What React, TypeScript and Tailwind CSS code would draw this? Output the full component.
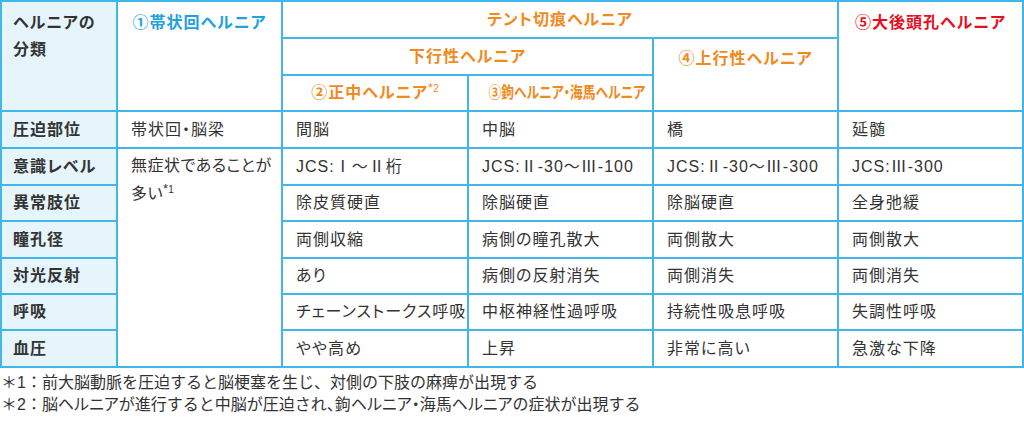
import React from "react";

const B = "border-2 border-[#41b6e9]";
const font = "font-['Liberation_Sans','Noto_Sans_CJK_JP',sans-serif]";

const rows: [string, string | null, string, string, string, string][] = [
  ["圧迫部位", "帯状回・脳梁", "間脳", "中脳", "橋", "延髄"],
  ["意識レベル", null, "JCS:Ⅰ〜Ⅱ桁", "JCS:Ⅱ-30〜Ⅲ-100", "JCS:Ⅱ-30〜Ⅲ-300", "JCS:Ⅲ-300"],
  ["異常肢位", null, "除皮質硬直", "除脳硬直", "除脳硬直", "全身弛緩"],
  ["瞳孔径", null, "両側収縮", "病側の瞳孔散大", "両側散大", "両側散大"],
  ["対光反射", null, "あり", "病側の反射消失", "両側消失", "両側消失"],
  ["呼吸", null, "チェーンストークス呼吸", "中枢神経性過呼吸", "持続性吸息呼吸", "失調性呼吸"],
  ["血圧", null, "やや高め", "上昇", "非常に高い", "急激な下降"],
];
const heights = ["h-[37px]", "h-[37px]", "h-[36px]", "h-[37px]", "h-[36px]", "h-[36px]", "h-[37px]"];

const P = ({ children }: { children: React.ReactNode }) => (
  <span className="[font-feature-settings:'palt']">{children}</span>
);

export default function App() {
  return (
    <div className={`w-[1024px] h-[428px] bg-white text-[#333] ${font}`}>
      <table className="border-collapse table-fixed w-[1022px] text-[16px] tracking-[1px] [font-feature-settings:'palt']">
        <colgroup>
          <col className="w-[116px]" />
          <col className="w-[165px]" />
          <col className="w-[186px]" />
          <col className="w-[185px]" />
          <col className="w-[185px]" />
          <col className="w-[185px]" />
        </colgroup>
        <thead>
          <tr className="h-[37px]">
            <th rowSpan={3} className={`${B} bg-[#e6f4fc] align-top text-left font-bold px-[11px] pt-[7px] leading-[27px]`}>
              ヘルニアの<br />分類
            </th>
            <th rowSpan={3} className={`${B} align-top text-center font-bold text-[#1ea1e1] pt-[7px] leading-[27px]`}>
              ①帯状回ヘルニア
            </th>
            <th colSpan={3} className={`${B} text-center font-bold text-[#f08a1d] leading-[27px]`}>
              テント切痕ヘルニア
            </th>
            <th rowSpan={3} className={`${B} align-top text-center font-bold text-[#e60f1e] pt-[7px] leading-[27px]`}>
              ⑤大後頭孔ヘルニア
            </th>
          </tr>
          <tr className="h-[37px]">
            <th colSpan={2} className={`${B} text-center font-bold text-[#f08a1d]`}>下行性ヘルニア</th>
            <th rowSpan={2} className={`${B} align-top text-center font-bold text-[#f08a1d] pt-[8px]`}>④上行性ヘルニア</th>
          </tr>
          <tr className="h-[36px]">
            <th className={`${B} text-center font-bold text-[#f08a1d]`}>
              ②正中ヘルニア<sup className="font-normal -top-[6px] tracking-[0px]"><span className="text-[13px]">*</span><span className="text-[10px]">2</span></sup>
            </th>
            <th className={`${B} text-center font-bold text-[#f08a1d]`}>
              <span className="inline-block scale-x-[0.8] tracking-[0px] whitespace-nowrap">③鉤ヘルニア・海馬ヘルニア</span>
            </th>
          </tr>
        </thead>
        <tbody>
          {rows.map((r, i) => (
            <tr key={i} className={heights[i]}>
              <td className={`${B} bg-[#e6f4fc] font-bold px-[11px]`}>{r[0]}</td>
              {i === 0 && <td className={`${B} px-[13px]`}>{r[1]}</td>}
              {i === 1 && (
                <td rowSpan={6} className={`${B} align-top px-[13px] pt-[3px] leading-[28px] whitespace-nowrap tracking-[0.5px]`}>
                  無症状であることが<br />多い<sup className="-top-[6px] tracking-[0px]"><span className="text-[13px]">*</span><span className="text-[10px]">1</span></sup>
                </td>
              )}
              {r.slice(2).map((c, j) => (
                <td key={j} className={`${B} px-[13px] whitespace-nowrap`}>{c}</td>
              ))}
            </tr>
          ))}
        </tbody>
      </table>
      <div className="text-[16px] leading-[22px] pt-[4px] pl-[1px] whitespace-nowrap">
        <p>＊1：前大脳動脈を圧迫すると脳梗塞を生じ、対側の下肢の麻痺が出現する</p>
        <p>
          ＊2：脳<P>ヘルニア</P>が進行すると中脳が圧迫され<P>、</P>鉤<P>ヘルニア・</P>海馬<P>ヘルニア</P>の症状が出現する
        </p>
      </div>
    </div>
  );
}
